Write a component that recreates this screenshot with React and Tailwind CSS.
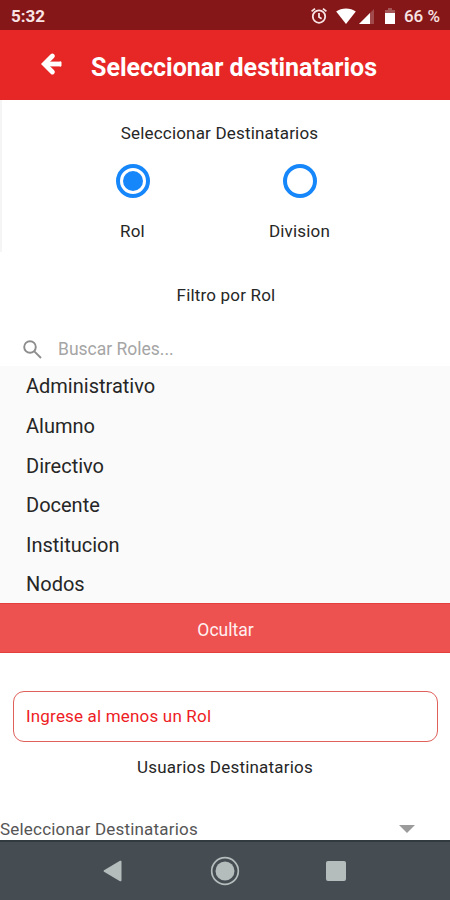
import { useState } from 'react';

const roles = ['Administrativo', 'Alumno', 'Directivo', 'Docente', 'Institucion', 'Nodos'];

const StatusBar = () => (
    <div className="h-[30px] shrink-0 bg-[#861718] text-[#f8e4e4] flex items-center justify-between pl-[11px] pr-[10px] pt-[2px]">
        <span className="text-[17px] font-bold leading-none">5:32</span>
        <div className="flex items-center">
            <svg className="w-[18px] h-[18px]" viewBox="0 0 18 18" fill="none" stroke="currentColor" strokeWidth="1.8">
                <circle cx="9" cy="9.600" r="6.200" />
                <path d="M9 6v4l2.600 1.800M1.600 4.400l3.400-2.800M16.400 4.400L13 1.600" />
            </svg>
            <svg className="w-[20px] h-[16px] ml-[8px]" viewBox="0 0 20 16" fill="#fff">
                <path d="M10 16L.2 3.400C3 1.500 6.300.5 10 .5s7 1 9.800 2.900z" />
            </svg>
            <svg className="w-[15px] h-[15px] ml-[3px]" viewBox="0 0 15 15">
                <path d="M0 15L15 0v15z" fill="#a04a4b" />
                <path d="M0 15L11 4v11z" fill="#fff" />
            </svg>
            <svg className="w-[10px] h-[16px] ml-[11px] -mt-[1px]" viewBox="0 0 10 16">
                <path d="M3 0h4v2h3v14H0V2h3z" fill="#a65556" />
                <path d="M0 5h10v10.500a.5.5 0 0 1-.5.5h-9a.5.5 0 0 1-.5-.5z" fill="#fff" />
            </svg>
            <span className="text-[17px] font-medium leading-none ml-[9px]">66 %</span>
        </div>
    </div>
);

const Header = () => (
    <header className="h-[70px] shrink-0 bg-[#e72725] text-white flex items-center pl-[40px]">
        <button className="w-[23px] h-[24px] -mt-[3px]">
            <svg className="w-[23px] h-[24px]" viewBox="0 0 23 24" fill="none" stroke="currentColor" strokeWidth="4.800">
                <path d="M12.400 4L4.400 12l8 8" strokeLinecap="round" />
                <path d="M5 12h16" />
                <path d="M20.500 10.600v2.800" strokeWidth="2" strokeLinecap="round" />
            </svg>
        </button>
        <h1 className="text-[25px] font-bold leading-none ml-[28px] pt-[4px] whitespace-nowrap">Seleccionar destinatarios</h1>
    </header>
);

const Radio = ({ label, checked, onClick }) => (
    <button onClick={onClick} className="flex-1 flex flex-col items-center">
        <span className="w-[34px] h-[34px] rounded-full border-[4px] border-[#1687fb] flex items-center justify-center">
            {checked && <span className="w-[20px] h-[20px] rounded-full bg-[#1687fb]"></span>}
        </span>
        <span className="text-[17px] leading-[20px] tracking-[0.18px] mt-[23px]">{label}</span>
    </button>
);

const NavBar = () => (
    <div className="h-[60px] shrink-0 mt-auto bg-[#454d52] border-t-2 border-[#303a3f] flex items-center text-[#b5bcbc]">
        <svg className="w-[19px] h-[22px] ml-[103px]" viewBox="0 0 19 22" fill="currentColor">
            <path d="M1 10.300L17 .800q1.500-.6 1.500 1v18.400q0 1.600-1.500 1L1 11.700q-1-.7 0-1.400z" />
        </svg>
        <svg className="w-[30px] h-[30px] ml-[88px]" viewBox="0 0 30 30">
            <circle cx="15" cy="15" r="13.300" fill="none" stroke="currentColor" strokeWidth="1.700" />
            <circle cx="15" cy="15" r="9.500" fill="currentColor" />
        </svg>
        <span className="w-[20px] h-[20px] rounded-[2px] bg-[#b5bcbc] ml-[86px]"></span>
    </div>
);

const App = () => {
    const [filter, setFilter] = useState('Rol');
    const [showList, setShowList] = useState(true);

    return (
        <div className="w-[450px] h-[900px] bg-white flex flex-col overflow-hidden font-[Roboto,sans-serif] text-[#262626]">
            <StatusBar />
            <Header />

            <section className="h-[152px] shrink-0 border-l-2 border-[#f5f5f5] pl-[47px] pr-[67px]">
                <p className="text-[17px] leading-[20px] tracking-[0.18px] mt-[23px] ml-[7px] text-center whitespace-nowrap">Seleccionar Destinatarios</p>
                <div className="flex mt-[21px]">
                    <Radio label="Rol" checked={filter === 'Rol'} onClick={() => setFilter('Rol')} />
                    <Radio label="Division" checked={filter === 'Division'} onClick={() => setFilter('Division')} />
                </div>
            </section>

            <p className="text-[17px] leading-[20px] tracking-[0.18px] mt-[33px] pl-[2px] text-center">Filtro por Rol</p>

            <div className="h-[34px] mt-[27px] shrink-0 flex items-center pl-[23px] text-[#a5a5a5]">
                <svg className="w-[19px] h-[19px]" viewBox="0 0 19 19" fill="none" stroke="#8d8d8d" strokeWidth="1.900">
                    <circle cx="7" cy="7" r="5.800" />
                    <path d="M11.300 11.300L18 18" />
                </svg>
                <span className="text-[17.5px] leading-[20px] ml-[16px]">Buscar Roles...</span>
            </div>

            {showList && (
                <ul className="h-[237px] shrink-0 bg-[#fafafa] pt-[0.4px]">
                    {roles.map((role) => (
                        <li key={role} className="h-[39.6px] pl-[26px] text-[20px] leading-[40px]">{role}</li>
                    ))}
                </ul>
            )}

            <button
                onClick={() => setShowList(!showList)}
                className="h-[50px] shrink-0 bg-[#ee5250] border-y border-[#e53e3d] text-[#fff0f0] text-[17.5px] pt-[4px] pl-[1px]"
            >
                {showList ? 'Ocultar' : 'Mostrar'}
            </button>

            <div className="h-[51px] shrink-0 mt-[38px] mr-[12px] ml-[13px] border border-[#e0605c] rounded-[11px] flex items-center pl-[12px] text-[17px] tracking-[0.18px] text-[#ee1c24]">
                Ingrese al menos un Rol
            </div>
            <p className="text-[17px] leading-[20px] tracking-[0.2px] mt-[15px] text-center">Usuarios Destinatarios</p>

            <div className="mt-[42px] flex items-center justify-between pr-[35px] text-[#555]">
                <span className="text-[17px] leading-[20px] tracking-[0.2px]">Seleccionar Destinatarios</span>
                <svg className="w-[16px] h-[8px]" viewBox="0 0 16 8" fill="#9b9b9b">
                    <path d="M0 0h16L8 8z" />
                </svg>
            </div>

            <NavBar />
        </div>
    );
};

export default App;
